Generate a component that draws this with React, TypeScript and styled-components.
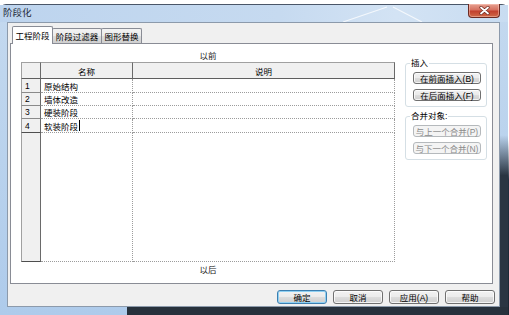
import React from 'react';
import styled, { createGlobalStyle } from 'styled-components';

const FONT = `"Liberation Sans", "Noto Sans CJK SC", sans-serif`;

const GlobalStyle = createGlobalStyle`
  html, body {
    margin: 0;
    padding: 0;
    background: #fff;
  }
  body {
    font-family: ${FONT};
    font-size: 8.5px;
    color: #000;
  }
  * {
    box-sizing: border-box;
  }
`;

const Desktop = styled.div`
  width: 509px;
  height: 315px;
  overflow: hidden;
  background: linear-gradient(to bottom, #fff 0, #fff 140px, #223040 180px, #1c2733 100%);
`;

const Window = styled.div`
  margin-top: 4px;
  width: 508px;
  height: 311px;
  display: flex;
  flex-direction: column;
  border-top: 1px solid #4a5668;
  border-radius: 6px 6px 0 0;
  padding-bottom: 8px;
  background:
    linear-gradient(to right, transparent 0, transparent 127px, #27313c 127px) left bottom / 100% 8px no-repeat,
    linear-gradient(to bottom, transparent 0, transparent 42%, #2a3542 55%) right top / 8px 100% no-repeat,
    linear-gradient(to bottom, #c4d9ef 0%, #b9d2ed 50%, #aecbeb 100%);
`;

const TitleBar = styled.div`
  position: relative;
  height: 17px;
  display: flex;
  align-items: flex-start;
  padding: 0 8px 0 3px;
  background: linear-gradient(to right, #bdd4ee 0%, #c6daf0 55%, #d3e3f4 78%, #c8dcf1 100%);
`;

const Title = styled.div`
  flex: 1;
  line-height: 16px;
  font-size: 9.5px;
  color: #1e2a38;
`;

const Streaks = styled.svg`
  position: absolute;
  left: 330px;
  top: 0;
  pointer-events: none;
`;

const CloseButton = styled.div`
  position: relative;
  margin-top: -1px;
  width: 32px;
  height: 14px;
  display: flex;
  align-items: center;
  justify-content: center;
  border: 1px solid #6b2a22;
  border-top: none;
  border-radius: 0 0 4px 4px;
  background: linear-gradient(to bottom, #e6a191 0%, #d6705f 45%, #c2402d 55%, #cf6a48 100%);
  box-shadow: inset 0 0 0 1px rgba(255, 210, 200, 0.45);
`;

const Client = styled.div`
  flex: 1;
  margin: 0 8px 0 7px;
  border: 1px solid #8c9aab;
  background: #f0f0f0;
  padding: 3px 6px 0 2px;
  display: flex;
  flex-direction: column;
`;

const TabStrip = styled.div`
  height: 17px;
  display: flex;
  align-items: flex-end;
  padding-left: 2px;
  position: relative;
  z-index: 1;
`;

const Tab = styled.div<{ $active?: boolean; $w: number }>`
  width: ${(p) => p.$w}px;
  height: ${(p) => (p.$active ? 18 : 15)}px;
  margin-bottom: ${(p) => (p.$active ? -1 : 0)}px;
  margin-left: ${(p) => (p.$active ? 0 : -1)}px;
  display: flex;
  align-items: center;
  justify-content: center;
  border: 1px solid #898c95;
  border-bottom: none;
  border-radius: 2px 2px 0 0;
  background: ${(p) =>
    p.$active ? '#fff' : 'linear-gradient(to bottom, #f3f3f3 0%, #ebebeb 50%, #dddddd 51%, #cfcfcf 100%)'};
  padding-bottom: ${(p) => (p.$active ? 2 : 0)}px;
`;

const Panel = styled.div`
  height: 241px;
  border: 1px solid #898c95;
  background: #fff;
  display: flex;
  padding: 0 5px 0 10px;
`;

const LeftColumn = styled.div`
  width: 374px;
  display: flex;
  flex-direction: column;
`;

const Caption = styled.div<{ $top: number }>`
  padding-top: ${(p) => p.$top}px;
  line-height: 12px;
  height: ${(p) => p.$top + 12}px;
  text-align: center;
  color: #1a1a1a;
`;

const Grid = styled.div`
  height: 200px;
  display: grid;
  grid-template-columns: 20px 92px 1fr;
  grid-template-rows: 17px 14px 13px 13px 14px 1fr;
`;

const Corner = styled.div`
  background: #f0f0f0;
  border: 1px solid #a0a0a0;
  border-right-color: #6a6a6a;
  border-bottom-color: #5e5e5e;
`;

const HeadCell = styled.div`
  background: #f0f0f0;
  border-top: 1px solid #a0a0a0;
  border-right: 1px solid #6a6a6a;
  border-bottom: 1px solid #5e5e5e;
  display: flex;
  align-items: center;
  justify-content: center;
`;

const RowHead = styled.div<{ $last?: boolean; $filler?: boolean }>`
  background: #f0f0f0;
  border-left: 1px solid #a0a0a0;
  border-right: 1px solid #6a6a6a;
  border-bottom: 1px solid ${(p) => (p.$last || p.$filler ? '#4e4e4e' : '#8a8a8a')};
  display: flex;
  align-items: center;
  padding-left: 3px;
`;

const Cell = styled.div`
  border-right: 1px dotted #9c9c9c;
  border-bottom: 1px dotted #9c9c9c;
  display: flex;
  align-items: center;
  padding-left: 3px;
  white-space: nowrap;
`;

const Caret = styled.span`
  display: inline-block;
  width: 1px;
  height: 11px;
  margin-left: 1px;
  background: #000;
`;

const RightColumn = styled.div`
  width: 82px;
  margin-left: 10px;
  padding-top: 14px;
  display: flex;
  flex-direction: column;
`;

const Group = styled.fieldset<{ $gap?: number }>`
  margin: ${(p) => p.$gap ?? 0}px 0 0 0;
  min-width: 0;
  border: 1px solid #d5dfe5;
  border-radius: 3px;
  padding: 0 5px 5px 7px;
  display: flex;
  flex-direction: column;
  gap: 5px;
`;

const GroupLabel = styled.legend`
  padding: 0 1px;
  margin-left: -3px;
  line-height: 10px;
  font-size: 8.5px;
  color: #000;
`;

const Button = styled.div<{ $w: number; $h: number; $disabled?: boolean; $default?: boolean }>`
  width: ${(p) => p.$w}px;
  height: ${(p) => p.$h}px;
  display: flex;
  align-items: center;
  justify-content: center;
  border-radius: 3px;
  white-space: nowrap;
  border: 1px solid ${(p) => (p.$disabled ? '#b5b9bc' : p.$default ? '#3c7fb1' : '#707070')};
  color: ${(p) => (p.$disabled ? '#8a8a8a' : '#000')};
  background: ${(p) =>
    p.$disabled
      ? '#f4f4f4'
      : 'linear-gradient(to bottom, #f2f2f2 0%, #ebebeb 50%, #dddddd 51%, #cfcfcf 100%)'};
  box-shadow: ${(p) =>
    p.$disabled ? 'none' : p.$default ? 'inset 0 0 0 1px #8fd0f2' : 'inset 0 0 0 1px rgba(255,255,255,0.75)'};
`;

const FirstButton = styled.div`
  margin-top: 4px;
`;

const ButtonRow = styled.div`
  margin-top: 6px;
  margin-right: -2px;
  display: flex;
  justify-content: flex-end;
  gap: 6px;
`;

const rows = ['原始结构', '墙体改造', '硬装阶段', '软装阶段'];

export default function App() {
  return (
    <>
      <GlobalStyle />
      <Desktop>
        <Window>
          <TitleBar>
            <Title>阶段化</Title>
            <Streaks width="100" height="17" viewBox="0 0 100 17">
              <path d="M13 17 L57 2" stroke="rgba(255,255,255,0.75)" strokeWidth="1.2" fill="none" />
              <path d="M63 2 L92 17" stroke="rgba(255,255,255,0.75)" strokeWidth="1.2" fill="none" />
            </Streaks>
            <CloseButton>
              <svg width="11" height="9" viewBox="0 0 11 9">
                <path d="M2 1.5 L9 7.5 M9 1.5 L2 7.5" stroke="#6e2a20" strokeWidth="3.2" strokeLinecap="round" />
                <path d="M2 1.5 L9 7.5 M9 1.5 L2 7.5" stroke="#fff" strokeWidth="1.8" strokeLinecap="round" />
              </svg>
            </CloseButton>
          </TitleBar>
          <Client>
            <TabStrip>
              <Tab $active $w={41}>工程阶段</Tab>
              <Tab $w={50}>阶段过滤器</Tab>
              <Tab $w={41}>图形替换</Tab>
            </TabStrip>
            <Panel>
              <LeftColumn>
                <Caption $top={6}>以前</Caption>
                <Grid>
                  <Corner />
                  <HeadCell>名称</HeadCell>
                  <HeadCell>说明</HeadCell>
                  {rows.map((name, i) => (
                    <React.Fragment key={name}>
                      <RowHead $last={i === rows.length - 1}>{i + 1}</RowHead>
                      <Cell>
                        {name}
                        {i === rows.length - 1 && <Caret />}
                      </Cell>
                      <Cell />
                    </React.Fragment>
                  ))}
                  <RowHead $filler />
                  <Cell />
                  <Cell />
                </Grid>
                <Caption $top={2}>以后</Caption>
              </LeftColumn>
              <RightColumn>
                <Group>
                  <GroupLabel>插入</GroupLabel>
                  <FirstButton>
                    <Button $w={68} $h={12}>在前面插入(B)</Button>
                  </FirstButton>
                  <Button $w={68} $h={12}>在后面插入(F)</Button>
                </Group>
                <Group $gap={4}>
                  <GroupLabel>合并对象:</GroupLabel>
                  <FirstButton>
                    <Button $w={68} $h={12} $disabled>与上一个合并(P)</Button>
                  </FirstButton>
                  <Button $w={68} $h={12} $disabled>与下一个合并(N)</Button>
                </Group>
              </RightColumn>
            </Panel>
            <ButtonRow>
              <Button $w={50} $h={14} $default>确定</Button>
              <Button $w={50} $h={14}>取消</Button>
              <Button $w={50} $h={14}>应用(A)</Button>
              <Button $w={50} $h={14}>帮助</Button>
            </ButtonRow>
          </Client>
        </Window>
      </Desktop>
    </>
  );
}
